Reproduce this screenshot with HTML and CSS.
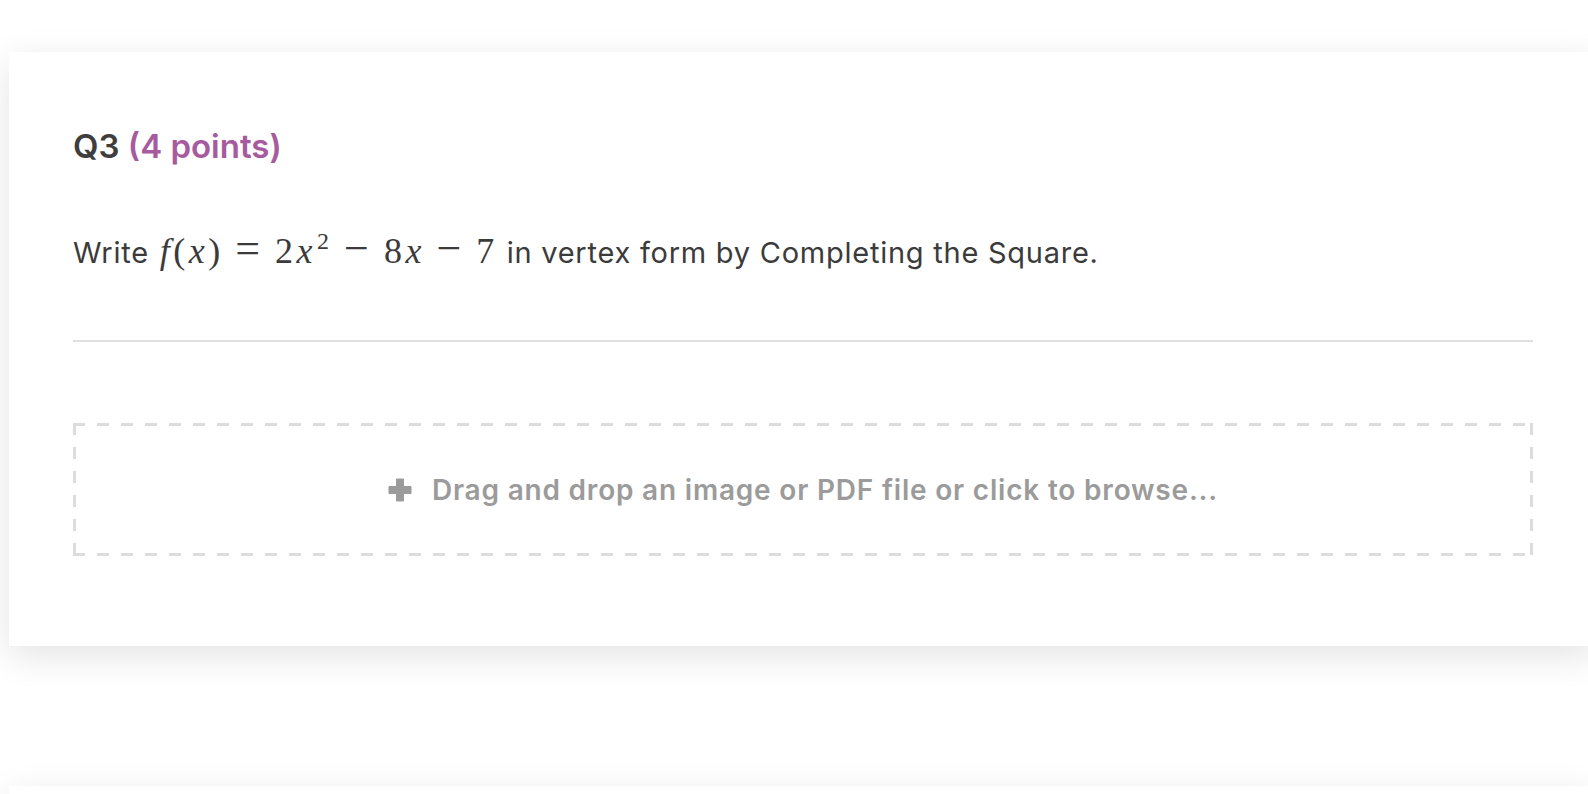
FILE: index.html
```html
<!DOCTYPE html>
<html>
<head>
<meta charset="utf-8">
<link rel="stylesheet" href="styles.css">
</head>
<body>
<div class="page">
  <section class="card">
    <h2 class="q-title">Q3 <span class="points">(4 points)</span></h2>
    <p class="prompt">Write <span class="math"><span class="mi">f</span><span class="mo">(</span><span class="mi">x</span><span class="mo">)</span><span class="op">=</span><span class="mn">2</span><span class="mi">x</span><sup class="sup">2</sup><span class="op">−</span><span class="mn">8</span><span class="mi">x</span><span class="op">−</span><span class="mn">7</span></span> in vertex form by Completing the Square.</p>
    <hr class="divider">
    <div class="dropzone">
      <svg class="plus" width="24" height="24" viewBox="0 0 24 24" aria-hidden="true"><path d="M8.5 1h7v7.5h7.5v7h-7.5v7.5h-7v-7.5h-7.5v-7h7.5z" fill="#9b9b9b" stroke="#9b9b9b" stroke-width="1" stroke-linejoin="round"/></svg>
      <span class="drop-text">Drag and drop an image or PDF file or click to browse...</span>
    </div>
  </section>
  <section class="card card-next"></section>
</div>
</body>
</html>
```

FILE: styles.css
```css
html, body {
  margin: 0;
  padding: 0;
  background: #ffffff;
  overflow: hidden;
}
.page {
  padding: 52px 0 0 9px;
  font-family: Inter, "Noto Sans", "Liberation Sans", sans-serif;
}
.card {
  width: 1588px;
  box-sizing: border-box;
  background: #ffffff;
  padding: 74px 64px 90px 64px;
  box-shadow: 0 10px 34px rgba(0, 0, 0, 0.11);
  margin-bottom: 140px;
}
.card-next {
  height: 200px;
}
.q-title {
  margin: 0;
  font-size: 33px;
  line-height: 40px;
  font-weight: 600;
  color: #3e3e3e;
  letter-spacing: 0;
}
.points {
  color: #a65b9e;
}
.prompt {
  margin: 65px 0 0 0;
  font-size: 29px;
  line-height: 44px;
  color: #3b3b3b;
  letter-spacing: 0.75px;
}
.math {
  font-family: "Liberation Serif", "DejaVu Serif", serif;
  font-size: 36px;
  line-height: 0;
  letter-spacing: 3.5px;
  margin: 0 0 0 2px;
}
.mi {
  font-style: italic;
}
.mo {
  font-style: normal;
}
.op {
  font-size: 44px;
  padding: 0 11.5px 0 11.5px;
}
.sup {
  font-size: 24px;
  line-height: 0;
  vertical-align: 14px;
  margin-left: 1px;
}
.divider {
  margin: 65px 0 0 0;
  border: 0;
  height: 2px;
  background: #e0e0e0;
}
.dropzone {
  margin-top: 81px;
  height: 133px;
  box-sizing: border-box;
  display: flex;
  align-items: center;
  justify-content: center;
  gap: 20px;
  background-image:
    repeating-linear-gradient(90deg, #dcdcdc 0 12px, transparent 12px 24px),
    repeating-linear-gradient(90deg, #dcdcdc 0 12px, transparent 12px 24px),
    repeating-linear-gradient(180deg, #dcdcdc 0 12px, transparent 12px 24px),
    repeating-linear-gradient(180deg, #dcdcdc 0 12px, transparent 12px 24px);
  background-size: 100% 3px, 100% 3px, 3px 100%, 3px 100%;
  background-position: left top, left bottom, left top, right top;
  background-repeat: no-repeat;
}
.plus {
  display: block;
  flex: none;
}
.drop-text {
  font-size: 28px;
  font-weight: 600;
  color: #9b9b9b;
  letter-spacing: 0.8px;
}
```
